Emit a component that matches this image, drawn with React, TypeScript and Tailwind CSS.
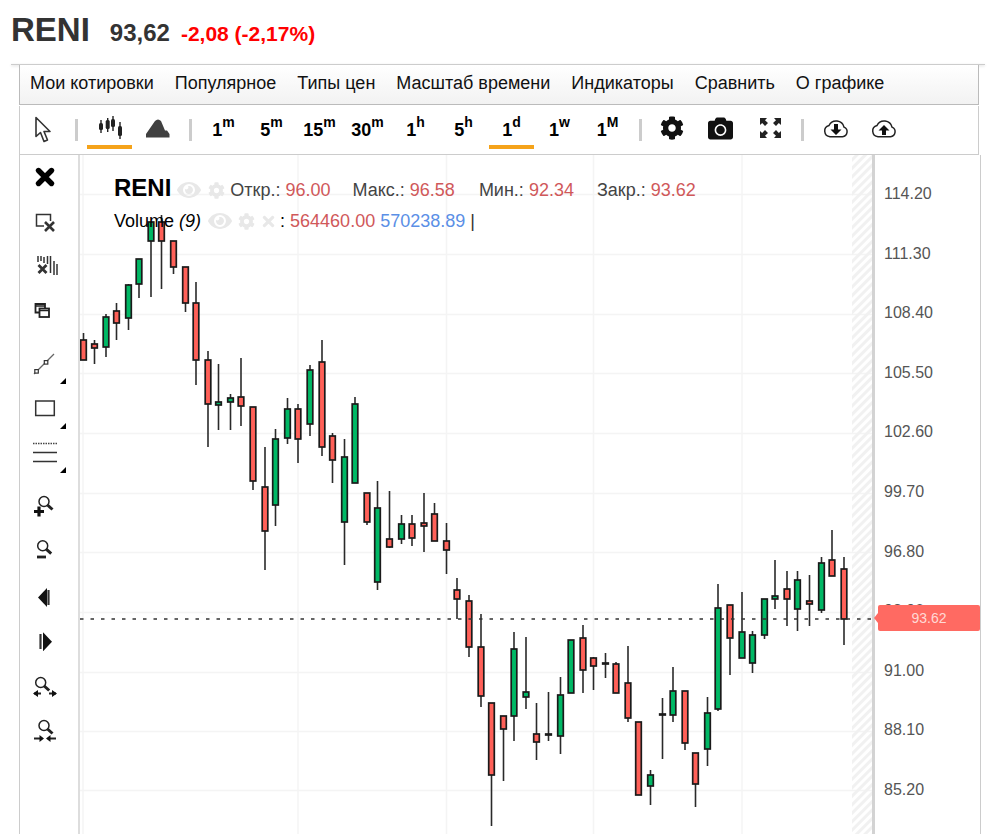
import type { ReactNode } from "react";
import { FaCamera, FaCog, FaEye, FaTimes } from "react-icons/fa";

type Candle = [number, number, number, number, number, number];

// x, wick top, wick bottom, body top, body bottom, 1 = green
const candles: Candle[] = [
  [83.5, 333, 360, 340, 360, 0],
  [94.5, 340, 364, 344, 348, 0],
  [106, 314, 357, 317, 347, 1],
  [116.5, 303, 340, 311, 323, 0],
  [128.5, 284, 330, 285, 318, 1],
  [139, 259, 298, 259, 284, 1],
  [151, 222, 297, 222, 241, 1],
  [161.5, 215, 289, 222, 241, 0],
  [173.5, 241, 274, 241, 267, 0],
  [185.5, 267, 312, 267, 303, 0],
  [196, 282, 385, 303, 360, 0],
  [208, 351, 447, 360, 404, 0],
  [218.5, 364, 430, 402, 405, 1],
  [230.5, 394, 430, 398, 402, 1],
  [241, 358, 426, 397, 406, 0],
  [253, 407, 490, 407, 481, 0],
  [265, 447, 570, 487, 531, 0],
  [275.5, 429, 526, 439, 505, 1],
  [287.5, 398, 444, 409, 438, 1],
  [298, 404, 463, 409, 439, 0],
  [310, 365, 436, 370, 424, 1],
  [322, 340, 456, 362, 447, 0],
  [332.5, 433, 483, 436, 460, 0],
  [344.5, 439, 565, 457, 522, 1],
  [355, 397, 483, 404, 483, 1],
  [367, 493, 525, 493, 522, 0],
  [377.5, 481, 590, 508, 582, 1],
  [389.5, 491, 548, 539, 547, 0],
  [401.5, 515, 544, 524, 539, 1],
  [412, 515, 546, 524, 538, 0],
  [424, 493, 552, 523, 526, 0],
  [434.5, 503, 541, 514, 541, 0],
  [446.5, 523, 574, 541, 550, 0],
  [457, 578, 619, 590, 599, 0],
  [469, 595, 657, 601, 647, 0],
  [481, 614, 707, 647, 696, 0],
  [491.5, 703, 826, 703, 775, 0],
  [503.5, 716, 781, 716, 729, 0],
  [514, 632, 741, 649, 716, 1],
  [526, 637, 709, 692, 697, 1],
  [536.5, 703, 760, 734, 742, 0],
  [548.5, 692, 741, 734, 735, 1],
  [560.5, 677, 754, 695, 736, 1],
  [571, 640, 693, 640, 693, 1],
  [583, 625, 693, 638, 670, 0],
  [593.5, 657, 690, 658, 666, 0],
  [605.5, 653, 678, 663, 664, 1],
  [616, 662, 693, 664, 693, 0],
  [628, 646, 722, 683, 718, 0],
  [638.5, 722, 795, 722, 795, 0],
  [650.5, 770, 805, 775, 786, 1],
  [662.5, 698, 759, 714, 715, 1],
  [673, 667, 722, 691, 715, 1],
  [685, 691, 750, 691, 743, 0],
  [695.5, 753, 807, 753, 784, 0],
  [707.5, 697, 766, 713, 749, 1],
  [718, 584, 711, 608, 709, 1],
  [730, 605, 675, 605, 638, 0],
  [742, 592, 658, 632, 658, 1],
  [752.5, 631, 673, 635, 663, 1],
  [764.5, 599, 639, 599, 635, 1],
  [775, 560, 609, 596, 599, 1],
  [787, 571, 626, 589, 599, 0],
  [797.5, 571, 631, 580, 609, 1],
  [809.5, 575, 626, 601, 604, 0],
  [821.5, 557, 613, 563, 610, 1],
  [832, 530, 576, 560, 576, 0],
  [844, 557, 645, 569, 619, 0],
];

const gridY = [194, 254, 314, 373, 433, 493, 552, 612, 672, 731, 790];
const gridX = [83, 298, 446.5, 593.5, 742];
const prices = ["114.20", "111.30", "108.40", "105.50", "102.60", "99.70", "96.80", "93.90", "91.00", "88.10", "85.20"];
const menu = ["Мои котировки", "Популярное", "Типы цен", "Масштаб времени", "Индикаторы", "Сравнить", "О графике"];
const periods: [string, string][] = [["1", "m"], ["5", "m"], ["15", "m"], ["30", "m"], ["1", "h"], ["5", "h"], ["1", "d"], ["1", "w"], ["1", "M"]];

const Sep = () => <div className="mx-[9px] h-[22px] w-[3px] bg-[#ccc]" />;

const Btn = ({ children, active }: { children: ReactNode; active?: boolean }) => (
  <div className={`flex h-[37px] w-[45px] items-center justify-center border-b-[4px] ${active ? "border-[#f5a31a]" : "border-transparent"}`}>
    {children}
  </div>
);

const Loupe = ({ cx, cy }: { cx: number; cy: number }) => (
  <g fill="none" stroke="#222">
    <circle cx={cx} cy={cy} r="5" strokeWidth="1.5" />
    <path d={`M${cx + 3.5} ${cy + 3.5}l5 4.5`} strokeWidth="3" />
  </g>
);

const icons: { h: ReactNode; corner?: boolean; gap?: boolean }[] = [
  {
    h: (
      <svg width="24" height="24" viewBox="0 0 24 24">
        <path d="M5.5 5.5l13 13M18.5 5.5l-13 13" stroke="#000" strokeWidth="5.4" strokeLinecap="round" />
      </svg>
    ),
  },
  {
    h: (
      <svg width="24" height="24" viewBox="0 0 24 24">
        <path d="M11 16H3.500V4.500H17.500V11" fill="none" stroke="#333" strokeWidth="1.5" />
        <path d="M12 12l9 9M21 12l-9 9" stroke="#333" strokeWidth="2.6" />
      </svg>
    ),
  },
  {
    h: (
      <svg className="overflow-visible" width="24" height="24" viewBox="0 0 24 24">
        <path d="M5 2v6M8 2v5M11 3v6M14.500 2v8M17.500 2v17M21 7v14M24 10v11" stroke="#333" strokeWidth="1.5" fill="none" />
        <path d="M5.500 11l8 8M13.500 11l-8 8" stroke="#333" strokeWidth="2.8" />
      </svg>
    ),
  },
  {
    h: (
      <svg width="24" height="24" viewBox="0 0 24 24">
        <path d="M7 13.500H2.500V5H12V9" fill="none" stroke="#222" strokeWidth="1.8" />
        <rect x="6.500" y="9.500" width="9.500" height="8.500" fill="#fff" stroke="#222" strokeWidth="1.8" />
        <path d="M2.500 7H12M6.500 11.500H16" stroke="#222" strokeWidth="1.5" />
      </svg>
    ),
  },
  {
    h: (
      <svg width="24" height="24" viewBox="0 0 24 24">
        <path d="M1 22L21 2" stroke="#666" strokeWidth="1.2" />
        <rect x="1.800" y="17.600" width="3.500" height="3.500" fill="#fff" stroke="#333" strokeWidth="1.2" />
        <rect x="11.300" y="8.600" width="3.500" height="3.500" fill="#fff" stroke="#333" strokeWidth="1.2" />
      </svg>
    ),
    corner: true,
    gap: true,
  },
  {
    h: (
      <svg width="24" height="24" viewBox="0 0 24 24">
        <rect x="2.700" y="5" width="18.600" height="14.500" fill="none" stroke="#333" strokeWidth="1.5" />
      </svg>
    ),
    corner: true,
  },
  {
    h: (
      <svg width="24" height="24" viewBox="0 0 24 24">
        <path d="M0 2.500H24" stroke="#444" strokeWidth="1.4" strokeDasharray="1.5 1" />
        <path d="M0 11.500H24M0 20.500H24" stroke="#333" strokeWidth="1.3" />
      </svg>
    ),
    corner: true,
  },
  {
    h: (
      <svg width="24" height="24" viewBox="0 0 24 24">
        <Loupe cx={11} cy={8.5} />
        <path d="M1 18.500H11M6 13.500v10" stroke="#111" strokeWidth="3.2" />
      </svg>
    ),
    gap: true,
  },
  {
    h: (
      <svg width="24" height="24" viewBox="0 0 24 24">
        <Loupe cx={9.7} cy={7.7} />
        <path d="M4 19H13" stroke="#222" strokeWidth="2.8" />
      </svg>
    ),
  },
  {
    h: (
      <svg width="24" height="24" viewBox="0 0 24 24">
        <path d="M5 14.500l9-9.500v19z" fill="#111" />
        <path d="M15.500 7v15" stroke="#333" strokeWidth="2.2" />
      </svg>
    ),
  },
  {
    h: (
      <svg width="24" height="24" viewBox="0 0 24 24">
        <path d="M19 14.800l-9-9.500v19z" fill="#111" />
        <path d="M7.500 7v15" stroke="#333" strokeWidth="2.2" />
      </svg>
    ),
  },
  {
    h: (
      <svg className="overflow-visible" width="26" height="24" viewBox="0 0 26 24">
        <Loupe cx={8.7} cy={10.5} />
        <path d="M2 21.500H9M17 21.500H24" stroke="#222" strokeWidth="1.8" />
        <path d="M1 21.500l5-3.500v7zM25 21.500l-5-3.500v7z" fill="#111" />
      </svg>
    ),
  },
  {
    h: (
      <svg className="overflow-visible" width="24" height="24" viewBox="0 0 24 24">
        <Loupe cx={11} cy={9.5} />
        <path d="M1 22.500H9M15 22.500H23" stroke="#222" strokeWidth="1.8" />
        <path d="M11 22.500l-4.500-3.500v7zM13 22.500l4.500-3.500v7z" fill="#111" />
      </svg>
    ),
  },
];

const Cloud = ({ up }: { up?: boolean }) => (
  <svg width="26" height="20" viewBox="0 0 26 20">
    <path d="M7 18.700H19.500A5 5 0 0 0 21 9.100 8 8 0 0 0 6 7.500 5.700 5.700 0 0 0 7 18.700Z" fill="none" stroke="#222" strokeWidth="1.5" />
    {up ? (
      <path d="M13 7l5.500 5.500H15V17H11V12.500H7.500Z" fill="#111" />
    ) : (
      <path d="M13 17l-5.500-5.500H11V6h4v5.500h3.500Z" fill="#111" />
    )}
  </svg>
);

export default function App() {
  return (
    <div className="h-[834px] w-[996px] overflow-hidden bg-white font-['Liberation_Sans',Arial,sans-serif]">
      <div className="flex h-[64px] items-baseline gap-[20px] pl-[11px] pt-[5px]">
        <span className="text-[33px] font-bold text-[#333]">RENI</span>
        <span className="text-[24px] font-bold text-[#333]">93,62</span>
        <span className="-ml-[9px] text-[21px] font-bold text-[#f00]">-2,08 (-2,17%)</span>
      </div>
      <div className="mx-[11px] h-px bg-[#ccc] shadow-[0_1px_3px_rgba(0,0,0,0.2)]" />
      <div className="ml-[19px] flex h-[40px] w-[960px] items-center gap-[21px] border-x border-b border-[#bbb] bg-gradient-to-b from-[#fff] to-[#f2f2f2] pb-[2px] pl-[10px] text-[18px] text-[#111]">
        {menu.map((m) => (
          <span key={m}>{m}</span>
        ))}
      </div>
      <div className="ml-[19px] mt-[1px] flex h-[49px] w-[960px] items-center border-x border-b border-[#ccc]">
        <div className="flex w-[46px] justify-center pb-[2px]">
          <svg width="18" height="27" viewBox="0 0 18 27">
            <path d="M2 1.500V20.500L6.500 16.500L10 25.500L13.500 24L10 15.500H16Z" fill="#fff" stroke="#333" strokeWidth="1.6" strokeLinejoin="round" />
          </svg>
        </div>
        <Sep />
        <div className="flex gap-[3px]">
          <Btn active>
            <svg width="24" height="24" viewBox="0 0 24 24">
              <path d="M3 4v13M9.700 2v14M15 0v15M22 6v17" stroke="#222" strokeWidth="1.4" />
              <rect x="1" y="7" width="4" height="7" rx="1.500" fill="#222" />
              <rect x="7.700" y="4" width="4" height="9" rx="1.500" fill="#222" />
              <rect x="13" y="3" width="4" height="8" rx="1.500" fill="#222" />
              <rect x="20" y="10" width="4" height="10" rx="1.500" fill="#222" />
            </svg>
          </Btn>
          <Btn>
            <svg width="24" height="22" viewBox="0 0 24 22">
              <path d="M0 20.500V17L9 4Q12 1 15 4L19 13.500H21L23.500 17V20.500Z" fill="#404040" />
            </svg>
          </Btn>
        </div>
        <Sep />
        <div className="flex gap-[3px]">
          {periods.map(([n, u], i) => (
            <Btn key={i} active={i === 6}>
              <span className="text-[18px] font-bold leading-none text-black">
                {n}
                <sup className="relative -top-[2px] align-super text-[14px] leading-none">{u}</sup>
              </span>
            </Btn>
          ))}
        </div>
        <Sep />
        <div className="flex gap-[3px]">
          <Btn>
            <FaCog className="mr-[3px] h-[24px] w-[24px] text-[#111]" />
          </Btn>
          <Btn>
            <FaCamera className="mr-[2px] h-[25px] w-[25px] text-[#111]" />
          </Btn>
          <Btn>
            <svg className="ml-[2px]" width="23" height="22" viewBox="0 0 23 22">
              <path d="M1 1H8L6 3.200 9 6 6 9 3.200 6 1 8ZM22 1H15L17 3.200 14 6 17 9 19.800 6 22 8ZM1 21H8L6 18.800 9 16 6 13 3.200 16 1 14ZM22 21H15L17 18.800 14 16 17 13 19.800 16 22 14Z" fill="#222" />
            </svg>
          </Btn>
        </div>
        <Sep />
        <div className="flex gap-[3px]">
          <Btn>
            <Cloud />
          </Btn>
          <Btn>
            <Cloud up />
          </Btn>
        </div>
      </div>
      <div className="ml-[19px] flex h-[680px] w-[962px] border-x border-[#ccc]">
        <div className="flex w-[60px] shrink-0 flex-col border-r-2 border-[#ddd]">
          {icons.map((ic, i) => (
            <div key={i} className={`relative flex h-[44.6px] shrink-0 items-center justify-center pr-[8px] ${ic.gap ? "mt-[8px]" : ""}`}>
              {ic.h}
              {ic.corner && <span className="absolute bottom-[2px] right-[12px] h-0 w-0 border-b-[6px] border-l-[6px] border-b-black border-l-transparent" />}
            </div>
          ))}
        </div>
        <div className="relative w-[792px] shrink-0">
          <svg className="block" width="792" height="680" viewBox="80 155 792 680">
            <defs>
              <pattern id="hatch" width="6" height="6" patternUnits="userSpaceOnUse" patternTransform="rotate(45)">
                <rect width="3" height="6" fill="#f1f1f1" />
              </pattern>
            </defs>
            {gridY.map((y) => (
              <line key={y} x1="80" x2="873" y1={y + 0.5} y2={y + 0.5} stroke="#f4f4f4" strokeWidth="1.5" />
            ))}
            {gridX.map((x) => (
              <line key={x} x1={x} x2={x} y1="155" y2="835" stroke="#f4f4f4" strokeWidth="1.5" />
            ))}
            <rect x="852" y="155" width="20" height="680" fill="url(#hatch)" />
            {candles.map(([x, wt, wb, bt, bb, g], i) => (
              <g key={i}>
                <line x1={x} x2={x} y1={wt} y2={wb} stroke="#2a2a2a" strokeWidth="1.6" />
                <rect x={x - 2.8} y={bt} width="5.6" height={bb - bt} fill={g ? "#00b865" : "#ff6058"} stroke="#1a1a1a" strokeWidth="1.7" />
              </g>
            ))}
            <line x1="80" x2="873" y1="619" y2="619" stroke="#333" strokeWidth="1.3" strokeDasharray="3.5 7" />
          </svg>
          <div className="absolute left-[34px] top-[19px] flex items-center text-[18px] leading-[28px] text-[#444]">
            <span className="mb-[4px] text-[24px] font-bold text-black">RENI</span>
            <FaEye className="ml-[6px] h-[24px] w-[24px] text-[#e8e8e8]" />
            <FaCog className="ml-[7px] h-[17px] w-[17px] text-[#e8e8e8]" />
            <span className="ml-[5px]">
              Откр.: <span className="text-[#d0585a]">96.00</span>
            </span>
            <span className="ml-[22px]">
              Макс.: <span className="text-[#d0585a]">96.58</span>
            </span>
            <span className="ml-[24px]">
              Мин.: <span className="text-[#d0585a]">92.34</span>
            </span>
            <span className="ml-[23px]">
              Закр.: <span className="text-[#d0585a]">93.62</span>
            </span>
          </div>
          <div className="absolute left-[34px] top-[52px] flex items-center text-[18px] leading-[28px] text-black">
            <span>
              Volume <i>(9)</i>
            </span>
            <FaEye className="ml-[7px] h-[24px] w-[24px] text-[#e8e8e8]" />
            <FaCog className="ml-[6px] h-[17px] w-[17px] text-[#e8e8e8]" />
            <FaTimes className="ml-[5px] h-[17px] w-[17px] text-[#e8e8e8]" />
            <span className="ml-[3px]">:</span>
            <span className="ml-[5px] text-[#d0585a]">564460.00</span>
            <span className="ml-[5px] text-[#5b8fe6]">570238.89</span>
            <span className="ml-[5px] text-[#333]">|</span>
          </div>
        </div>
        <div className="relative flex-1 border-l-[3px] border-[#d3d3d3] pl-[9px] pt-[29px] text-[16px] text-[#555]">
          {prices.map((p) => (
            <div key={p} className="flex h-[59.6px] items-start leading-[20px]">
              {p}
            </div>
          ))}
          <div className="absolute left-[3px] top-[450px] flex h-[26px] w-[102px] items-center justify-center rounded-[2px] bg-[#ff6a62] text-[14px] text-[#ffd9d5]">
            93.62
            <span className="absolute -left-[4px] top-[8px] h-0 w-0 border-y-[5px] border-r-[4px] border-y-transparent border-r-[#ff6a62]" />
          </div>
        </div>
      </div>
    </div>
  );
}
